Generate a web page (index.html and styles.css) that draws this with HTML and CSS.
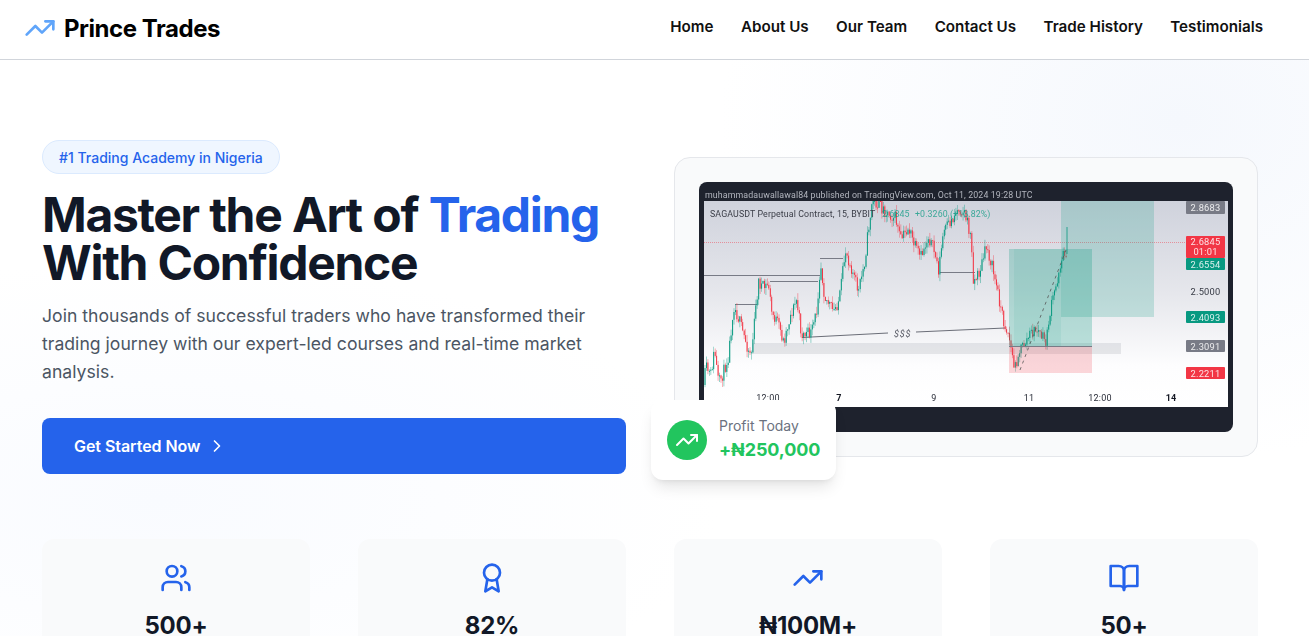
FILE: index.html
```html
<!DOCTYPE html>
<html lang="en">
<head>
<meta charset="utf-8">
<title>Prince Trades</title>
<link rel="stylesheet" href="styles.css">
</head>
<body>
<header class="nav">
  <a class="brand" href="#">
    <svg class="brand-icon" viewBox="0 0 24 24"><polyline points="22 7 13.5 15.5 8.5 10.5 2 17"/><polyline points="16 7 22 7 22 13"/></svg>
    <span>Prince Trades</span>
  </a>
  <nav class="links">
    <a href="#">Home</a><a href="#">About Us</a><a href="#">Our Team</a><a href="#">Contact Us</a><a href="#">Trade History</a><a href="#">Testimonials</a>
  </nav>
</header>
<main class="page">
  <section class="hero">
    <div class="copy">
      <span class="badge">#1 Trading Academy in Nigeria</span>
      <h1>Master the Art of <em>Trading</em><br>With Confidence</h1>
      <p>Join thousands of successful traders who have transformed their trading journey with our expert-led courses and real-time market analysis.</p>
      <a class="cta" href="#">Get Started Now
        <svg class="cta-icon" viewBox="0 0 24 24"><path d="m9 18 6-6-6-6"/></svg>
      </a>
    </div>
    <div class="visual">
      <div class="frame">
        <svg class="chart" id="chart" viewBox="0 0 534 250" role="img" aria-label="SAGAUSDT trading chart">
          <defs>
            <linearGradient id="chartbg" x1="0" y1="0" x2="0" y2="1">
              <stop offset="0" stop-color="#cfd2dc"/>
              <stop offset="0.45" stop-color="#e6e7ec"/>
              <stop offset="0.8" stop-color="#fdfdfe"/>
              <stop offset="1" stop-color="#ffffff"/>
            </linearGradient>
          </defs>
          <rect width="534" height="250" rx="8" fill="#1e222d"/>
          <text class="t-head" x="6" y="15.5">muhammadauwallawal84 published on TradingView.com, Oct 11, 2024 19:28 UTC</text>
          <rect x="5" y="19" width="524" height="206" fill="url(#chartbg)"/>
          <rect x="53" y="161" width="369" height="11" fill="#787b86" opacity=".16"/>
          <g fill="none" stroke="#787b86" stroke-width="1">
            <path d="M5 93.5H121M121 76.5H144M71 99.5H119M36 122.5H58M241 90.5H276"/>
            <path d="M103 155.5L189 151M217 150L306 146" stroke="#6b6e78"/>
          </g>
          <path d="M5 60.5H487" stroke="#f23645" stroke-width="1" stroke-dasharray="1 1" opacity=".45"/>
          <g id="candles"></g>
          <rect x="362" y="19" width="93" height="116" fill="#089981" opacity=".2"/>
          <rect x="310" y="67" width="83" height="97" fill="#089981" opacity=".26"/>
          <rect x="315" y="67" width="47" height="97" fill="#089981" opacity=".08"/>
          <rect x="310" y="164" width="83" height="27" fill="#f23645" opacity=".2"/>
          <path d="M310 164.5H393" stroke="#787b86"/>
          <path d="M321 188L367 68" stroke="#555" stroke-dasharray="3 4" fill="none" stroke-width=".8"/>
          <text class="t-ann" x="195" y="155">$$$</text>
          <text class="t-title" x="11" y="35">SAGAUSDT Perpetual Contract, 15, BYBIT</text>
          <text class="t-up" x="183" y="35">2.6845</text>
          <text class="t-up" x="216" y="35">+0.3260 (+13.82%)</text>
          <rect x="487" y="19" width="39" height="13" rx="1" fill="#787b86"/>
          <text class="t-price" x="506.5" y="29">2.8683</text>
          <rect x="487" y="54" width="39" height="22" rx="1" fill="#f23645"/>
          <text class="t-price" x="506.5" y="63">2.6845</text>
          <text class="t-price" x="506.5" y="73">01:01</text>
          <rect x="487" y="76" width="39" height="12" rx="1" fill="#089981"/>
          <text class="t-price" x="506.5" y="85.5">2.6554</text>
          <text class="t-price t-dark" x="506.5" y="112.5">2.5000</text>
          <rect x="487" y="129" width="39" height="12" rx="1" fill="#089981"/>
          <text class="t-price" x="506.5" y="138.5">2.4093</text>
          <rect x="487" y="158" width="39" height="12" rx="1" fill="#787b86"/>
          <text class="t-price" x="506.5" y="167.5">2.3091</text>
          <rect x="487" y="185" width="39" height="12" rx="1" fill="#f23645"/>
          <text class="t-price" x="506.5" y="194.5">2.2211</text>
          <text class="t-time" x="69" y="218.5">12:00</text>
          <text class="t-time t-bold" x="140" y="218.5">7</text>
          <text class="t-time" x="235" y="218.5">9</text>
          <text class="t-time" x="330" y="218.5">11</text>
          <text class="t-time" x="401" y="218.5">12:00</text>
          <text class="t-time t-bold" x="472" y="218.5">14</text>
        </svg>
      </div>
      <div class="profit">
        <span class="profit-icon">
          <svg viewBox="0 0 24 24"><polyline points="22 7 13.5 15.5 8.5 10.5 2 17"/><polyline points="16 7 22 7 22 13"/></svg>
        </span>
        <div class="profit-text">
          <span class="profit-label">Profit Today</span>
          <strong class="profit-value">+₦250,000</strong>
        </div>
      </div>
    </div>
  </section>
  <section class="stats">
    <article class="stat">
      <svg class="stat-icon" viewBox="0 0 24 24"><path d="M16 21v-2a4 4 0 0 0-4-4H6a4 4 0 0 0-4 4v2"/><circle cx="9" cy="7" r="4"/><path d="M22 21v-2a4 4 0 0 0-3-3.87"/><path d="M16 3.13a4 4 0 0 1 0 7.75"/></svg>
      <div class="stat-value">500+</div>
    </article>
    <article class="stat">
      <svg class="stat-icon" viewBox="0 0 24 24"><circle cx="12" cy="8" r="6"/><path d="M15.477 12.89 17 22l-5-3-5 3 1.523-9.11"/></svg>
      <div class="stat-value">82%</div>
    </article>
    <article class="stat">
      <svg class="stat-icon" viewBox="0 0 24 24"><polyline points="22 7 13.5 15.5 8.5 10.5 2 17"/><polyline points="16 7 22 7 22 13"/></svg>
      <div class="stat-value">₦100M+</div>
    </article>
    <article class="stat">
      <svg class="stat-icon" viewBox="0 0 24 24"><path d="M2 3h6a4 4 0 0 1 4 4v14a3 3 0 0 0-3-3H2z"/><path d="M22 3h-6a4 4 0 0 0-4 4v14a3 3 0 0 1 3-3h7z"/></svg>
      <div class="stat-value">50+</div>
    </article>
  </section>
</main>
<script src="chart.js"></script>
</body>
</html>
```
FILE: styles.css
```css
* { box-sizing: border-box; }
html, body { margin: 0; height: 636px; overflow: hidden; }
body {
  font-family: Inter, "Liberation Sans", sans-serif;
  color: #111827;
  background:
    radial-gradient(460px 340px at 1180px 120px, #f5f8fd 0, rgba(245,248,253,0) 100%),
    radial-gradient(560px 240px at 160px 500px, #f9fbff 0, rgba(249,251,255,0) 100%),
    #fff;
}
a { color: inherit; text-decoration: none; }

.nav {
  height: 60px;
  display: flex;
  align-items: center;
  justify-content: space-between;
  padding: 0 46px 0 24px;
  background: #fff;
  border-bottom: 1px solid #d1d5db;
}
.brand { display: flex; align-items: center; gap: 8px; padding-bottom: 3px; font-size: 24px; font-weight: 700; letter-spacing: -.46px; color: #000; }
.brand-icon { width: 32px; height: 32px; fill: none; stroke: #60a5fa; stroke-width: 2; stroke-linecap: round; stroke-linejoin: round; }
.links { display: flex; gap: 27.4px; padding-bottom: 6px; font-size: 15.2px; font-weight: 600; color: #111; }

.page { padding: 80px 51px 0 42px; }
.hero { display: grid; grid-template-columns: 584px 584px; gap: 48px; align-items: center; }
.copy { display: flex; flex-direction: column; align-items: flex-start; }
.badge {
  padding: 7px 16px 5px;
  font-size: 14px;
  line-height: 20px;
  font-weight: 500;
  color: #2563eb;
  background: #eff6ff;
  border: 1px solid #dbeafe;
  border-radius: 999px;
}
h1 { margin: 17px 0 15px; font-size: 48px; line-height: 48px; font-weight: 700; letter-spacing: -1.32px; word-spacing: .4px; color: #111827; }
h1 em { font-style: normal; color: #2563eb; }
.copy p { margin: 0 0 32px; font-size: 17.6px; line-height: 28px; letter-spacing: .02px; color: #4b5563; }
.cta {
  width: 100%;
  height: 56px;
  display: flex;
  align-items: center;
  gap: 7px;
  padding: 0 32px;
  font-size: 16px;
  font-weight: 600;
  letter-spacing: -.05px;
  color: #fff;
  background: #2563eb;
  border-radius: 8px;
}
.cta-icon { width: 20px; height: 20px; fill: none; stroke: #fff; stroke-width: 2; stroke-linecap: round; stroke-linejoin: round; }

.visual { position: relative; }
.frame {
  height: 300px;
  padding: 24px;
  background: #f9fafb;
  border: 1px solid #e5e7eb;
  border-radius: 16px;
}
.chart { display: block; width: 534px; height: 250px; filter: blur(.35px); }
.t-head, .t-title, .t-up, .t-price, .t-time, .t-ann { font-family: Roboto, "Liberation Sans", sans-serif; }
.t-head { font-size: 8.8px; fill: #b2b5be; letter-spacing: .12px; }
.t-title { font-size: 8.8px; fill: #3a3d47; letter-spacing: .12px; }
.t-up { font-size: 8.8px; fill: #089981; opacity: .75; letter-spacing: .1px; }
.t-price { font-size: 9.3px; fill: #fff; text-anchor: middle; opacity: .85; letter-spacing: .2px; }
.t-dark { fill: #131722; }
.t-time { font-size: 9px; fill: #2a2e39; text-anchor: middle; letter-spacing: .2px; }
.t-bold { font-weight: 700; fill: #131722; }
.t-ann { font-size: 9px; fill: #50535e; font-style: italic; letter-spacing: .8px; }

.profit {
  position: absolute;
  left: -23px;
  top: 243px;
  width: 185px;
  height: 80px;
  display: flex;
  align-items: center;
  gap: 12px;
  padding: 0 16px;
  background: #fff;
  border-radius: 12px;
  box-shadow: 0 10px 15px -3px rgba(0,0,0,.1), 0 4px 6px -4px rgba(0,0,0,.1);
}
.profit-icon { flex: none; width: 40px; height: 40px; display: flex; align-items: center; justify-content: center; background: #22c55e; border-radius: 50%; }
.profit-icon svg { width: 24px; height: 24px; fill: none; stroke: #fff; stroke-width: 2; stroke-linecap: round; stroke-linejoin: round; }
.profit-text { display: flex; flex-direction: column; white-space: nowrap; }
.profit-label { font-size: 14px; line-height: 20px; color: #6b7280; }
.profit-value { font-size: 18px; line-height: 28px; font-weight: 700; letter-spacing: -.1px; color: #22c55e; }

.stats { margin-top: 65px; display: grid; grid-template-columns: repeat(4, 268px); gap: 48px; }
.stat { height: 160px; padding-top: 23px; text-align: center; background: #f9fafb; border-radius: 12px; }
.stat-icon { display: block; width: 32px; height: 32px; margin: 0 auto 16px; fill: none; stroke: #2563eb; stroke-width: 2; stroke-linecap: round; stroke-linejoin: round; }
.stat-value { font-size: 24px; line-height: 32px; font-weight: 700; letter-spacing: -.25px; color: #111827; }
```
FILE: chart.js
```js
(function () {
  var NS = 'http://www.w3.org/2000/svg';
  var OX = 699, OY = 182, TOP = 19;
  // price path as screen waypoints taken from the published chart
  var path = [[704,385],[708,368],[712,376],[716,350],[720,384],[725,372],[730,355],[735,305],[740,318],[745,335],[750,350],[753,352],
    [757,310],[760,282],[765,288],[770,284],[773,312],[780,325],[785,342],[792,315],[798,300],[803,335],[813,333],[818,312],[822,262],
    [826,296],[835,312],[841,298],[847,250],[853,268],[860,292],[866,262],[870,228],[874,200],[880,205],[888,212],[897,218],[902,240],
    [910,228],[916,246],[922,258],[930,236],[936,252],[940,270],[945,232],[952,222],[960,208],[966,212],[972,236],[975,282],[981,272],
    [988,246],[994,268],[1000,296],[1005,322],[1010,334],[1016,370],[1020,352],[1027,342],[1033,332],[1039,330],[1044,338],[1048,342],
    [1050,322],[1054,300],[1058,284],[1061,266],[1066,252]];
  var seed = 11;
  function rnd() { seed = (seed * 16807) % 2147483647; return seed / 2147483647; }
  function at(x) {
    for (var i = 1; i < path.length; i++) {
      if (x <= path[i][0]) {
        var a = path[i - 1], b = path[i];
        return a[1] + (b[1] - a[1]) * (x - a[0]) / (b[0] - a[0]);
      }
    }
    return path[path.length - 1][1];
  }
  function el(name, attrs) {
    var n = document.createElementNS(NS, name);
    for (var k in attrs) n.setAttribute(k, attrs[k]);
    return n;
  }
  var g = document.getElementById('candles');
  var STEP = 1.45;
  var prev = at(704);
  for (var x = 705; x <= 1067; x += STEP) {
    var next = at(x + STEP) + (rnd() - 0.5) * 13;
    var col = next < prev ? '#089981' : '#f23645';
    var top = Math.min(prev, next), bot = Math.max(prev, next);
    var wt = Math.max(TOP, top - OY - rnd() * 7), wb = bot - OY + rnd() * 7;
    g.appendChild(el('line', { x1: (x - OX).toFixed(1), x2: (x - OX).toFixed(1), y1: wt.toFixed(1), y2: wb.toFixed(1), stroke: col, 'stroke-width': '.6', opacity: '.7' }));
    var ry = Math.max(TOP, top - OY);
    g.appendChild(el('rect', { x: (x - OX - 0.5).toFixed(1), y: ry.toFixed(1), width: '1', height: Math.max(1, bot - OY - ry).toFixed(1), fill: col }));
    prev = next;
  }
  // closing wick of the last candle
  g.appendChild(el('line', { x1: 368, x2: 368, y1: 45, y2: 72, stroke: '#089981', 'stroke-width': '.8' }));
})();
```
